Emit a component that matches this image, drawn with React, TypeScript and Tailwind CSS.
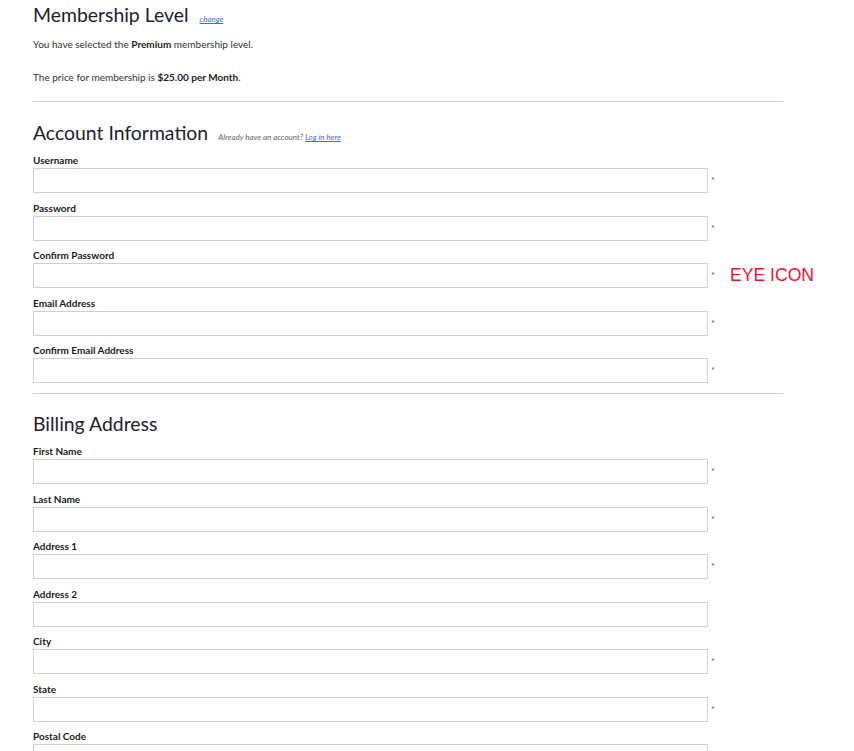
import React from "react";

type Field = {
  label: string;
  required: boolean;
  type?: string;
  note?: string;
};

const accountFields: Field[] = [
  { label: "Username", required: true },
  { label: "Password", required: true, type: "password" },
  { label: "Confirm Password", required: true, type: "password", note: "EYE ICON" },
  { label: "Email Address", required: true, type: "email" },
  { label: "Confirm Email Address", required: true, type: "email" },
];

const billingFields: Field[] = [
  { label: "First Name", required: true },
  { label: "Last Name", required: true },
  { label: "Address 1", required: true },
  { label: "Address 2", required: false },
  { label: "City", required: true },
  { label: "State", required: true },
  { label: "Postal Code", required: true },
];

function FormField({ field }: { field: Field }) {
  return (
    <div className="mb-[7.5px]">
      <label className="block text-[10px] font-bold leading-[15px] text-[#1b1b1b]">
        {field.label}
      </label>

      <div className="flex items-center">
        <input
          type={field.type || "text"}
          className="h-[25px] w-[675px] shrink-0 border border-[#cfcfd8] bg-white outline-none"
        />

        <span className="ml-[3px] w-[6px] shrink-0 text-[9px] leading-none text-[#4a5a9a]">
          {field.required ? "*" : ""}
        </span>

        {field.note && (
          <span className="ml-[13px] whitespace-nowrap font-['Liberation_Sans',sans-serif] text-[17.6px] leading-none text-[#f0142f]">
            {field.note}
          </span>
        )}
      </div>
    </div>
  );
}

export default function App() {
  return (
    <div className="min-h-screen bg-white font-['Lato',sans-serif] text-[#222]">
      <div className="w-[783px] pl-[33px]">
        <div className="flex items-baseline pt-[3px]">
          <h2 className="text-[19.4px] leading-[24px] font-normal text-[#1e2130]">
            Membership Level
          </h2>

          <a href="#" className="ml-[11px] text-[8px] italic text-[#3d6ed4] underline">
            change
          </a>
        </div>

        <p className="mt-[10px] text-[10px] leading-[14px] text-[#333]">
          You have selected the <strong className="text-[#222]">Premium</strong> membership level.
        </p>

        <p className="mt-[19px] text-[10px] leading-[14px] text-[#333]">
          The price for membership is <strong className="text-[#222]">$25.00 per Month</strong>.
        </p>

        <hr className="mt-[17px] border-t border-[#cccccc]" />

        <div className="mt-[19px] flex items-baseline">
          <h2 className="text-[19.4px] leading-[24px] font-normal text-[#1e2130]">
            Account Information
          </h2>

          <span className="ml-[10px] text-[8px] italic text-[#666]">
            Already have an account?{" "}
            <a href="#" className="text-[#3d6ed4] underline">
              Log in here
            </a>
          </span>
        </div>

        <div className="mt-[8px]">
          {accountFields.map((field) => (
            <FormField key={field.label} field={field} />
          ))}
        </div>

        <hr className="mt-[10px] border-t border-[#cccccc]" />

        <h2 className="mt-[18px] text-[19.4px] leading-[24px] font-normal text-[#1e2130]">
          Billing Address
        </h2>

        <div className="mt-[8px]">
          {billingFields.map((field) => (
            <FormField key={field.label} field={field} />
          ))}
        </div>
      </div>
    </div>
  );
}
